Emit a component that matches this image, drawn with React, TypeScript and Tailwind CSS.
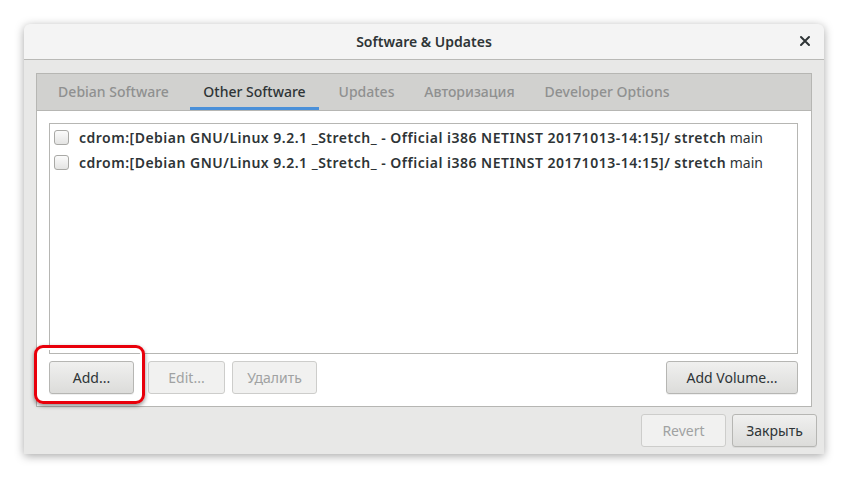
import React from "react";

const TABS = [
  { label: "Debian Software", w: "w-[137px]", active: false },
  { label: "Other Software", w: "w-[129px]", active: true },
  { label: "Updates", w: "w-[79px]", active: false },
  { label: "Авторизация", w: "w-[111px]", active: false },
  { label: "Developer Options", w: "w-[148px]", active: false },
];

const SOURCES = [
  "cdrom:[Debian GNU/Linux 9.2.1 _Stretch_ - Official i386 NETINST 20171013-14:15]/ stretch",
  "cdrom:[Debian GNU/Linux 9.2.1 _Stretch_ - Official i386 NETINST 20171013-14:15]/ stretch",
];

function Button({
  children,
  disabled,
  className = "",
}: {
  children: React.ReactNode;
  disabled?: boolean;
  className?: string;
}) {
  return (
    <button
      className={
        "h-[33px] rounded-[3px] border text-[14px] flex items-center justify-center " +
        (disabled
          ? "border-[#cdcdcb] bg-[#f1f1f0] text-[#a0a2a2] "
          : "border-[#b6b6b3] bg-gradient-to-b from-[#f0f0ef] to-[#dcdcda] text-[#2e3436] shadow-[0_1px_0_rgba(0,0,0,0.06)] ") +
        className
      }
    >
      {children}
    </button>
  );
}

export default function App() {
  return (
    <div
      className="w-[848px] h-[478px] bg-white pt-[24px] pl-[24px]"
      style={{ fontFamily: '"Noto Sans", "Open Sans", sans-serif' }}
    >
      <div className="w-[800px] h-[430px] flex flex-col rounded-t-[6px] bg-[#e8e8e7] shadow-[0_2px_10px_rgba(0,0,0,0.35)]">
        {/* Header bar */}
        <div className="h-[36px] shrink-0 relative flex items-center justify-center rounded-t-[6px] bg-[#f4f4f4] border-b border-[#b9b9b6]">
          <span className="text-[14px] font-semibold text-[#2e3436]">Software &amp; Updates</span>
          <span className="absolute right-[13px] top-[11px]">
            <svg width="12" height="12" viewBox="0 0 12 12">
              <path d="M2 2l8 8M10 2l-8 8" stroke="#2e3436" strokeWidth="2" strokeLinecap="round" />
            </svg>
          </span>
        </div>

        <div className="flex-1 flex flex-col px-[12px] pt-[13px]">
          {/* Notebook */}
          <div className="w-[776px] h-[334px] flex flex-col border border-[#b6b6b3] bg-white">
            <div className="h-[37px] shrink-0 flex gap-[8px] pl-[8px] bg-[#d1d1cf] border-b border-[#b6b6b3]">
              {TABS.map((t) => (
                <div
                  key={t.label}
                  className={
                    t.w +
                    " h-full flex items-center justify-center text-[14px] border-b-[3px] " +
                    (t.active
                      ? "border-[#4a90d9] text-[#2e3436] font-medium"
                      : "border-transparent text-[#8f9090] font-medium")
                  }
                >
                  <span className="mt-[2px]">{t.label}</span>
                </div>
              ))}
            </div>

            <div className="flex-1 flex flex-col pt-[12px] pl-[12px] pr-[13px]">
              <div className="h-[231px] border border-[#b6b6b3] bg-white flex flex-col pt-[1px]">
                {SOURCES.map((s, i) => (
                  <div key={i} className="h-[25px] flex items-center pl-[4px] gap-[10px]">
                    <span className="w-[15px] h-[15px] rounded-[3px] border border-[#a9a9a6] bg-gradient-to-b from-[#fbfbfb] to-[#e4e4e3]" />
                    <span className="text-[14px] text-[#2e3436] whitespace-nowrap">
                      <b className="font-semibold tracking-[0.5px]">{s}</b> main
                    </span>
                  </div>
                ))}
              </div>

              <div className="mt-[7px] flex items-center">
                <div className="relative">
                  <Button className="w-[85px]">Add...</Button>
                  <div className="absolute left-[-15px] top-[-16px] w-[111px] h-[59px] rounded-[9px] border-[3px] border-[#e8000b] shadow-[inset_0_0_0_2px_#ffffff,0_2px_4px_rgba(0,0,0,0.45)] pointer-events-none" />
                </div>
                <Button disabled className="w-[77px] ml-[14px]">Edit...</Button>
                <Button disabled className="w-[85px] ml-[7px]">Удалить</Button>
                <Button className="w-[132px] ml-auto">Add Volume...</Button>
              </div>
            </div>
          </div>

          <div className="mt-[7px] flex justify-end gap-[6px] mr-[-5px]">
            <Button disabled className="w-[85px]">Revert</Button>
            <Button className="w-[85px]">Закрыть</Button>
          </div>
        </div>
      </div>
    </div>
  );
}
